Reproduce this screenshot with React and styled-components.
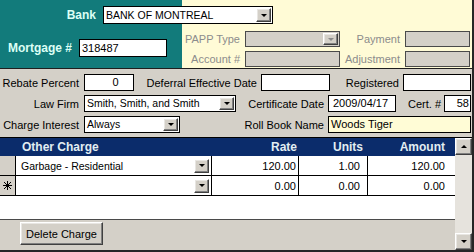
import React from 'react';
import styled, { createGlobalStyle, css } from 'styled-components';

const GlobalStyle = createGlobalStyle`
  html, body { margin: 0; padding: 0; background: #ffffff; }
  #root { width: 474px; height: 252px; }
`;

const raised = css`
  box-sizing: border-box;
  background: #d4d0c8;
  border: 1px solid;
  border-color: #ffffff #404040 #404040 #ffffff;
  box-shadow: inset -1px -1px #808080, inset 1px 1px #e8e6e2;
`;

const Frame = styled.div`
  width: 474px;
  height: 252px;
  box-sizing: border-box;
  border-right: 2px solid #262626;
  border-bottom: 2px solid #262626;
  display: flex;
  flex-direction: column;
  overflow: hidden;
  background: #d4d0c8;
  font-family: "Liberation Sans", Arial, sans-serif;
  font-size: 11px;
  color: #000;
`;

/* ---------- top band ---------- */
const Top = styled.section`
  height: 69px;
  box-sizing: border-box;
  border-bottom: 1px solid #1e1e1e;
  background: linear-gradient(90deg, #127b7b 0 182px, #fffbd6 182px);
  display: flex;
  flex-direction: column;
`;

const BankRow = styled.div`
  display: flex;
  align-items: center;
  padding-top: 6px;
`;

const HeadLabel = styled.label`
  width: ${p => p.$w}px;
  box-sizing: border-box;
  padding-right: 7px;
  text-align: right;
  font-weight: bold;
  font-size: 12px;
  color: #dcfff5;
  white-space: nowrap;
`;

const Lower = styled.div`
  display: flex;
  flex: 1;
`;

const TealPane = styled.div`
  width: 182px;
  box-sizing: border-box;
  padding-top: 4px;
  display: flex;
  align-items: center;
`;

const CreamPane = styled.div`
  flex: 1;
  display: grid;
  grid-template-columns: 63px 95px 65px 65px;
  grid-auto-rows: 16px;
  row-gap: 4px;
  align-items: center;
  align-content: start;
  padding-top: 7px;
`;

const DimLabel = styled.span`
  text-align: right;
  padding-right: 5px;
  color: #8c8c8c;
  white-space: nowrap;
`;

const DisabledBox = styled.div`
  height: 16px;
  box-sizing: border-box;
  border: 1px solid #4a4a4a;
  background: #d4d0c8;
  display: flex;
  justify-content: flex-end;
`;

/* ---------- middle band ---------- */
const Mid = styled.section`
  height: 69px;
  box-sizing: border-box;
  border-bottom: 1px solid #000;
  padding: 5px 0 4px;
  display: flex;
  flex-direction: column;
  gap: 4px;
  background: #d4d0c8;
`;

const Row = styled.div`
  display: flex;
  align-items: center;
  height: 17px;
`;

const FieldLabel = styled.span`
  width: ${p => p.$w}px;
  box-sizing: border-box;
  padding-right: ${p => p.$pr ?? 5}px;
  text-align: right;
  white-space: nowrap;
`;

const TextBox = styled.div`
  width: ${p => p.$w}px;
  height: ${p => p.$h ?? 17}px;
  box-sizing: border-box;
  border: 1px solid #000;
  background: ${p => p.$bg ?? '#fff'};
  padding: 0 ${p => p.$pr ?? 2}px 0 ${p => p.$pl ?? 2}px;
  line-height: ${p => (p.$h ?? 17) - 2}px;
  text-align: ${p => p.$align ?? 'left'};
  white-space: nowrap;
  overflow: hidden;
`;

const Combo = styled.div`
  width: ${p => p.$w}px;
  height: ${p => p.$h ?? 17}px;
  box-sizing: border-box;
  border: 1px solid #000;
  background: #fff;
  display: flex;
  align-items: stretch;
`;

const ComboText = styled.span`
  flex: 1;
  padding-left: 2px;
  font-size: 10.5px;
  line-height: ${p => p.$lh ?? 15}px;
  white-space: nowrap;
  overflow: hidden;
`;

const DropBtn = styled.span`
  ${raised};
  width: 15px;
  margin: 1px;
  display: flex;
  align-items: center;
  justify-content: center;
`;

const Arrow = styled.span`
  width: 0;
  height: 0;
  border-left: 3px solid transparent;
  border-right: 3px solid transparent;
  ${p => (p.$up
    ? css`border-bottom: 3px solid ${p.$c ?? '#000'};`
    : css`border-top: 3px solid ${p.$c ?? '#000'};`)}
`;

/* ---------- grid ---------- */
const COLS = '16px 196px 87px 69px 87px';

const GridArea = styled.section`
  flex: 1;
  display: flex;
  min-height: 0;
`;

const GridMain = styled.div`
  flex: 1;
  display: flex;
  flex-direction: column;
`;

const HeaderRow = styled.div`
  display: grid;
  grid-template-columns: ${COLS};
  height: 18px;
  background: #0b2c6b;
  color: #e2eef2;
  font-weight: bold;
  font-size: 12px;
  align-items: center;
`;

const HeadCell = styled.span`
  text-align: ${p => p.$align ?? 'left'};
  padding: 0 ${p => p.$pr ?? 0}px 0 ${p => p.$pl ?? 0}px;
  white-space: nowrap;
`;

const DataRow = styled.div`
  display: grid;
  grid-template-columns: ${COLS};
  height: 20px;
  box-sizing: border-box;
  border-bottom: 1px solid #000;
  background: #fff;
`;

const Selector = styled.div`
  background: #d4d0c8;
  border-right: 1px solid #000;
  display: flex;
  align-items: center;
  justify-content: center;
`;

const Cell = styled.div`
  box-sizing: border-box;
  border-right: ${p => (p.$last ? 'none' : '1px solid #000')};
  display: flex;
  align-items: center;
  justify-content: ${p => (p.$num ? 'flex-end' : 'flex-start')};
  padding: 0 ${p => p.$pr ?? 0}px 0 ${p => p.$pl ?? 0}px;
  white-space: nowrap;
  overflow: hidden;
`;

const CellText = styled.span`
  flex: 1;
  font-size: 10.5px;
`;

const CellDrop = styled.span`
  ${raised};
  width: 15px;
  height: 14px;
  margin-right: 2px;
  display: flex;
  align-items: center;
  justify-content: center;
`;

const Filler = styled.div`
  flex: 1;
  background: #fff;
`;

const Footer = styled.div`
  height: 31px;
  box-sizing: border-box;
  border-top: 1px solid #4a4a4a;
  background: #d4d0c8;
  padding: 2px 0 0 20px;
`;

const PushButton = styled.button`
  ${raised};
  width: 83px;
  height: 23px;
  padding: 0;
  font-family: inherit;
  font-size: 11px;
  color: #000;
`;

const ScrollBar = styled.div`
  width: 17px;
  display: flex;
  flex-direction: column;
  background: #e6e3dd;
`;

const ScrollBtn = styled.div`
  ${raised};
  height: 17px;
  display: flex;
  align-items: center;
  justify-content: center;
`;

const Track = styled.div`
  flex: 1;
`;

const NewRowMark = () => (
  <svg width="9" height="9" viewBox="0 0 9 9">
    <g stroke="#000" strokeWidth="1" shapeRendering="crispEdges">
      <line x1="4.5" y1="0" x2="4.5" y2="9" />
      <line x1="0" y1="4.5" x2="9" y2="4.5" />
      <line x1="1.2" y1="1.2" x2="7.8" y2="7.8" />
      <line x1="7.8" y1="1.2" x2="1.2" y2="7.8" />
    </g>
  </svg>
);

const charges = [
  { name: 'Garbage - Residential', rate: '120.00', units: '1.00', amount: '120.00', mark: false },
  { name: '', rate: '0.00', units: '0.00', amount: '0.00', mark: true },
];

export default function App() {
  return (
    <>
      <GlobalStyle />
      <Frame>
        <Top>
          <BankRow>
            <HeadLabel $w={103}>Bank</HeadLabel>
            <Combo $w={170} $h={18}>
              <ComboText $lh={16}>BANK OF MONTREAL</ComboText>
              <DropBtn><Arrow /></DropBtn>
            </Combo>
          </BankRow>
          <Lower>
            <TealPane>
              <HeadLabel $w={79}>Mortgage #</HeadLabel>
              <TextBox $w={88} $h={18}>318487</TextBox>
            </TealPane>
            <CreamPane>
              <DimLabel>PAPP Type</DimLabel>
              <DisabledBox>
                <DropBtn><Arrow $c="#8a8a8a" /></DropBtn>
              </DisabledBox>
              <DimLabel>Payment</DimLabel>
              <DisabledBox />
              <DimLabel>Account #</DimLabel>
              <DisabledBox />
              <DimLabel>Adjustment</DimLabel>
              <DisabledBox />
            </CreamPane>
          </Lower>
        </Top>

        <Mid>
          <Row>
            <FieldLabel $w={84}>Rebate Percent</FieldLabel>
            <TextBox $w={50} $align="center" $pl={15}>0</TextBox>
            <FieldLabel $w={127} $pr={4}>Deferral Effective Date</FieldLabel>
            <TextBox $w={69} />
            <FieldLabel $w={73} $pr={4}>Registered</FieldLabel>
            <TextBox $w={68} />
          </Row>
          <Row>
            <FieldLabel $w={84}>Law Firm</FieldLabel>
            <Combo $w={152}>
              <ComboText>Smith, Smith, and Smith</ComboText>
              <DropBtn><Arrow /></DropBtn>
            </Combo>
            <FieldLabel $w={92} $pr={4}>Certificate Date</FieldLabel>
            <TextBox $w={68} $pl={4}>2009/04/17</TextBox>
            <FieldLabel $w={48} $pr={3}>Cert. #</FieldLabel>
            <TextBox $w={27} $align="right" $pr={1}>58</TextBox>
          </Row>
          <Row>
            <FieldLabel $w={84}>Charge Interest</FieldLabel>
            <Combo $w={96}>
              <ComboText>Always</ComboText>
              <DropBtn><Arrow /></DropBtn>
            </Combo>
            <FieldLabel $w={148} $pr={4}>Roll Book Name</FieldLabel>
            <TextBox $w={143} $bg="#fffcd6">Woods Tiger</TextBox>
          </Row>
        </Mid>

        <GridArea>
          <GridMain>
            <HeaderRow>
              <span />
              <HeadCell $pl={6}>Other Charge</HeadCell>
              <HeadCell $align="right" $pr={2}>Rate</HeadCell>
              <HeadCell $align="right" $pr={5}>Units</HeadCell>
              <HeadCell $align="right" $pr={10}>Amount</HeadCell>
            </HeaderRow>
            {charges.map((c, i) => (
              <DataRow key={i}>
                <Selector>{c.mark && <NewRowMark />}</Selector>
                <Cell $pl={5}>
                  <CellText>{c.name}</CellText>
                  <CellDrop><Arrow /></CellDrop>
                </Cell>
                <Cell $num $pr={2}>{c.rate}</Cell>
                <Cell $num $pr={7}>{c.units}</Cell>
                <Cell $num $last $pr={10}>{c.amount}</Cell>
              </DataRow>
            ))}
            <Filler />
            <Footer>
              <PushButton>Delete Charge</PushButton>
            </Footer>
          </GridMain>
          <ScrollBar>
            <ScrollBtn><Arrow $up /></ScrollBtn>
            <Track />
            <ScrollBtn><Arrow /></ScrollBtn>
          </ScrollBar>
        </GridArea>
      </Frame>
    </>
  );
}
